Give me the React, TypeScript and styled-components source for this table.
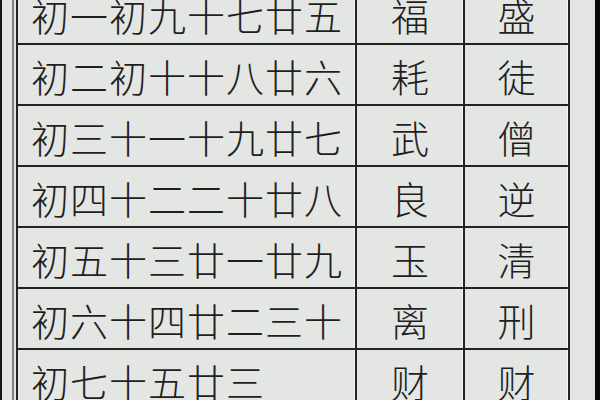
import React from 'react'
import styled, { createGlobalStyle } from 'styled-components'

const GlobalStyle = createGlobalStyle`
    html, body { margin: 0; padding: 0; background: #e3e5e2; }
    #root { width: 600px; height: 400px; overflow: hidden; }
`

const Frame = styled.div`
    display: flex;
    width: 600px;
    height: 400px;
    box-sizing: border-box;
    border-left: 2px solid #151515;
    border-right: 5px solid #080808;
    background: #e3e5e2;
    padding-left: 10px;
    overflow: hidden;
`

const Outline = styled.div`
    align-self: flex-start;
    margin-top: -18px;
    border-left: 2px solid #808080;
    padding-left: 2px;
`

const Grid = styled.div`
    display: grid;
    grid-template-columns: 337px 106px 103px;
    grid-auto-rows: 59px;
    gap: 2px;
    padding: 2px;
    background: #232323;
`

const Cell = styled.div<{ $center?: boolean }>`
    display: flex;
    align-items: center;
    justify-content: ${p => (p.$center ? 'center' : 'flex-start')};
    padding-left: ${p => (p.$center ? '0' : '13px')};
    padding-top: 2px;
    background: #e4e6e3;
    box-shadow: inset -1px 0 0 #f7f8f7;
    font-family: "Noto Sans CJK SC", "Noto Sans CJK TC", sans-serif;
    font-weight: 300;
    font-size: 38px;
    letter-spacing: ${p => (p.$center ? '0' : '1px')};
    line-height: 1;
    color: #1f1f1f;
    white-space: nowrap;
`

const rows: [string, string, string][] = [
    ['初一初九十七廿五', '福', '盛'],
    ['初二初十十八廿六', '耗', '徒'],
    ['初三十一十九廿七', '武', '僧'],
    ['初四十二二十廿八', '良', '逆'],
    ['初五十三廿一廿九', '玉', '清'],
    ['初六十四廿二三十', '离', '刑'],
    ['初七十五廿三', '财', '财'],
]

const App: React.FC = () => {
    return (
        <>
            <GlobalStyle />
            <Frame>
                <Outline>
                    <Grid>
                        {rows.map(([days, a, b]) => (
                            <React.Fragment key={days}>
                                <Cell>{days}</Cell>
                                <Cell $center>{a}</Cell>
                                <Cell $center>{b}</Cell>
                            </React.Fragment>
                        ))}
                    </Grid>
                </Outline>
            </Frame>
        </>
    )
}

export default App
